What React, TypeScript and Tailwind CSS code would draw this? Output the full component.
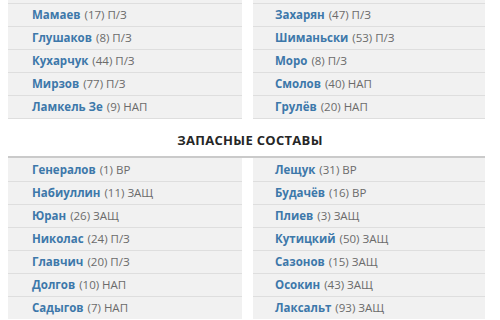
import * as React from 'react';

type Player = { name: string; rest: string };

const startLeft: Player[] = [
    { name: 'Мамаев', rest: '(17) П/З' },
    { name: 'Глушаков', rest: '(8) П/З' },
    { name: 'Кухарчук', rest: '(44) П/З' },
    { name: 'Мирзов', rest: '(77) П/З' },
    { name: 'Ламкель Зе', rest: '(9) НАП' },
];

const startRight: Player[] = [
    { name: 'Захарян', rest: '(47) П/З' },
    { name: 'Шиманьски', rest: '(53) П/З' },
    { name: 'Моро', rest: '(8) П/З' },
    { name: 'Смолов', rest: '(40) НАП' },
    { name: 'Грулёв', rest: '(20) НАП' },
];

const subsLeft: Player[] = [
    { name: 'Генералов', rest: '(1) ВР' },
    { name: 'Набиуллин', rest: '(11) ЗАЩ' },
    { name: 'Юран', rest: '(26) ЗАЩ' },
    { name: 'Николас', rest: '(24) П/З' },
    { name: 'Главчич', rest: '(20) П/З' },
    { name: 'Долгов', rest: '(10) НАП' },
    { name: 'Садыгов', rest: '(7) НАП' },
];

const subsRight: Player[] = [
    { name: 'Лещук', rest: '(31) ВР' },
    { name: 'Будачёв', rest: '(16) ВР' },
    { name: 'Плиев', rest: '(3) ЗАЩ' },
    { name: 'Кутицкий', rest: '(50) ЗАЩ' },
    { name: 'Сазонов', rest: '(15) ЗАЩ' },
    { name: 'Осокин', rest: '(43) ЗАЩ' },
    { name: 'Лаксальт', rest: '(93) ЗАЩ' },
];

const Row: React.FC<{ p: Player; border: boolean; pad: string }> = ({ p, border, pad }) => (
    <div
        className={`flex h-[23px] items-center bg-[#f1f1f1] ${pad} text-[11.5px] ${border ? 'border-t border-[#dedede]' : ''}`}
    >
        <span className="font-bold text-[#3d78aa]">{p.name}</span>
        <span className="ml-[4px] text-[#6b6b6b]">{p.rest}</span>
    </div>
);

// top block shows a sliver of the row above, so every row gets a top border
const Column: React.FC<{ players: Player[]; width: string; pad: string; top?: boolean }> = ({
    players,
    width,
    pad,
    top,
}) => (
    <div className={`flex flex-col ${width}`}>
        {top && <div className="h-[3px] bg-[#f1f1f1]" />}
        {players.map((p, i) => (
            <Row key={p.name} p={p} border={!!top || i > 0} pad={pad} />
        ))}
        {top && <div className="h-px bg-[#dedede]" />}
    </div>
);

export default function App() {
    return (
        <div
            className="h-[320px] w-[500px] overflow-hidden bg-white"
            style={{ fontFamily: '"Open Sans", "Liberation Sans", sans-serif' }}
        >
            <div className="flex gap-[11px] pl-[8px]">
                <Column players={startLeft} width="w-[234px]" pad="pl-[24px]" top />
                <Column players={startRight} width="w-[232px]" pad="pl-[22px]" top />
            </div>
            <div className="flex h-[37px] items-center justify-center pt-[7px] text-[13px] font-bold tracking-[0.3px] text-[#262626]">
                ЗАПАСНЫЕ СОСТАВЫ
            </div>
            <div className="ml-[8px] h-[2px] w-[477px] bg-[#cacaca]" />
            <div className="flex gap-[11px] pl-[8px]">
                <Column players={subsLeft} width="w-[234px]" pad="pl-[24px]" />
                <Column players={subsRight} width="w-[232px]" pad="pl-[22px]" />
            </div>
        </div>
    );
}
